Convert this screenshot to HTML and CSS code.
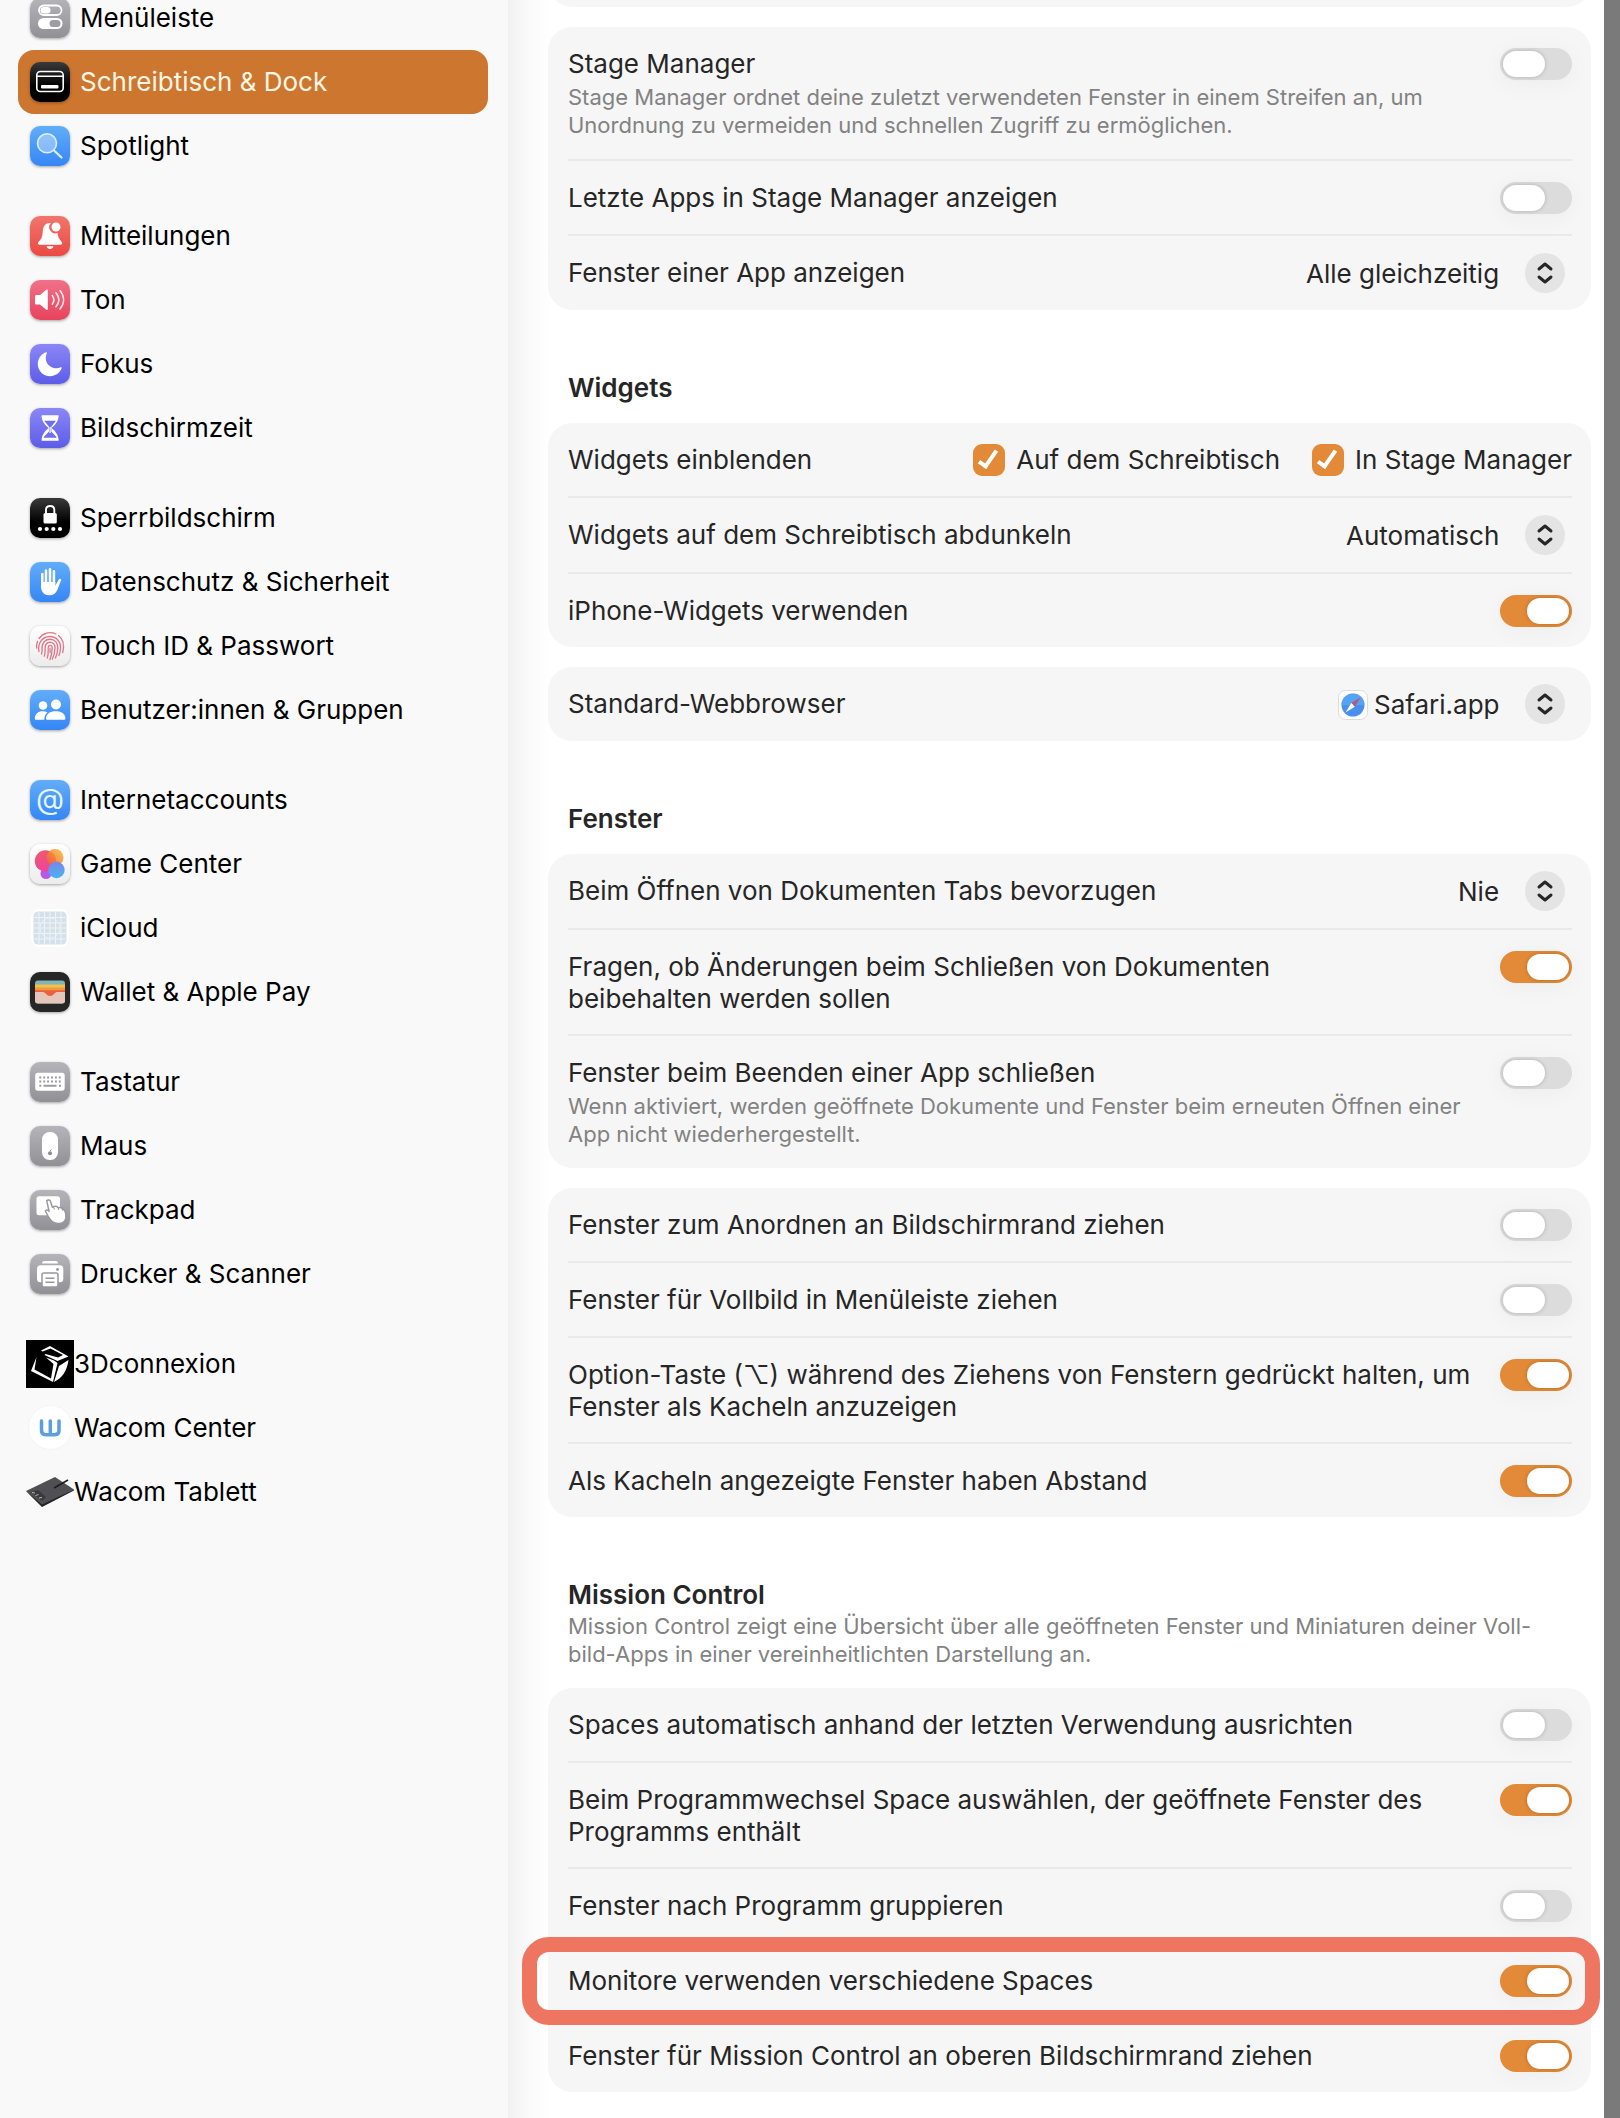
FILE: index.html
```html
<!DOCTYPE html>
<html lang="de">
<head>
    <meta charset="UTF-8">
    <meta name="viewport" content="width=device-width, initial-scale=1.0">
    <title>Schreibtisch &amp; Dock</title>
    <link rel="stylesheet" href="styles.css">
</head>
<body>

<div class="window">

<nav class="sidebar">
    <div class="group">
        <a class="item" href="#">
            <svg class="icon gray" viewBox="0 0 40 40"><rect x="9" y="7.500" width="22.500" height="9.500" rx="4.750" fill="none" stroke="#fff" stroke-width="1.800"/><rect x="10.500" y="9" width="10" height="6.500" rx="3.250" fill="#fff"/><rect x="8" y="20" width="24.500" height="11" rx="5.500" fill="#fff"/><rect x="19.500" y="22" width="11" height="7" rx="3.500" fill="#9d9da3"/></svg>
            Menüleiste
        </a>
        <a class="item active" href="#">
            <svg class="icon black" viewBox="0 0 40 40"><rect x="6.800" y="9.500" width="26.400" height="20" rx="3.500" fill="none" stroke="#fff" stroke-width="1.600"/><path d="M7 14.300h26" stroke="#fff" stroke-width="1.400"/><rect x="11" y="23" width="17.500" height="3.600" rx="1" fill="#fff"/></svg>
            Schreibtisch &amp; Dock
        </a>
        <a class="item" href="#">
            <svg class="icon blue" viewBox="0 0 40 40"><circle cx="17" cy="17.300" r="9.500" fill="#fff" fill-opacity=".35" stroke="#d9f1ff" stroke-width="1.600"/><path d="M24 24.500l7.500 7" stroke="#d9f1ff" stroke-width="2.200" stroke-linecap="round"/></svg>
            Spotlight
        </a>
    </div>

    <div class="group">
        <a class="item" href="#">
            <svg class="icon red" viewBox="0 0 40 40"><path d="M20 7c-4.500 0-7 3.500-7.200 8-.2 5-1 7.500-4 10.500-1.500 1.800-.8 3.200 1 3.200h20.600c1.800 0 2.500-1.400 1-3.200-2.400-2.500-3.600-5-3.900-8.500A6.200 6.200 0 0 1 20.800 7z" fill="#fff"/><circle cx="26" cy="11" r="4.500" fill="#fff"/><path d="M16.500 30.300h7c-.8 3.600-6.200 3.600-7 0z" fill="#fff"/></svg>
            Mitteilungen
        </a>
        <a class="item" href="#">
            <svg class="icon pink" viewBox="0 0 40 40"><path d="M5 16.500c0-1 .6-1.500 1.500-1.500H10l6-5c1-.8 1.800-.4 1.800.8v18c0 1.200-.8 1.600-1.800.8l-6-5H6.500c-.9 0-1.500-.5-1.500-1.500z" fill="#fff"/><path d="M22.300 15.500c2 2.700 2 6 0 8.700M26 12.800c3.500 4.300 3.500 9.700 0 14M30 10.500c4.700 5.800 4.700 12.800 0 18.600" fill="none" stroke="#fff" stroke-opacity=".85" stroke-width="1.600" stroke-linecap="round"/></svg>
            Ton
        </a>
        <a class="item" href="#">
            <svg class="icon indigo" viewBox="0 0 40 40"><path d="M16 8.200C11.200 10 7.800 14.500 7.800 20c0 6.800 5.400 12.200 12.200 12.200 5.500 0 10-3.400 11.700-8.200.2-.7-.3-1-.9-.7C22 27 12.500 19 16.900 9c.2-.6-.2-1-.9-.8z" fill="#fff"/></svg>
            Fokus
        </a>
        <a class="item" href="#">
            <svg class="icon indigo" viewBox="0 0 40 40"><path d="M12.500 7.200h15.200c.8 0 1.100.5.900 1.300-.7 5.500-3.400 8.300-7 11.500 3.600 3.200 6.300 6 7 11.500.2.800-.1 1.300-.9 1.300H12.500c-.8 0-1.100-.5-.9-1.300.7-5.500 3.400-8.300 7-11.500-3.600-3.200-6.300-6-7-11.500-.2-.8.100-1.300.9-1.300z" fill="#fff"/><path d="M14.200 12.800h11.700l-4.600 6v4.700l5 5.300c.4.700.1 1-.5 1H14.500c-.6 0-.9-.3-.5-1l5-5.300v-4.700z" fill="#6f6ff0"/><path d="M20.100 19v6" stroke="#fff" stroke-width="1.300"/></svg>
            Bildschirmzeit
        </a>
    </div>

    <div class="group">
        <a class="item" href="#">
            <svg class="icon black" viewBox="0 0 40 40"><rect x="13.500" y="15" width="13.300" height="10.500" rx="1.600" fill="#fff"/><path d="M16 16v-4.200c0-5 8.300-5 8.300 0V16" fill="none" stroke="#fff" stroke-width="1.900"/><g fill="#fff"><circle cx="10" cy="31" r="2.100"/><circle cx="16.700" cy="31" r="2.100"/><circle cx="23.300" cy="31" r="2.100"/><circle cx="30" cy="31" r="2.100"/></g></svg>
            Sperrbildschirm
        </a>
        <a class="item" href="#">
            <svg class="icon blue" viewBox="0 0 40 40"><path d="M12.300 12v13M16 8.500V22M20 7.200V22M23.900 9.200V22" stroke="#fff" stroke-width="2.600" stroke-linecap="round"/><path d="M11 20h14.300v3.700l3.500-6.200c.9-1.300 2.700-.5 2.200 1l-3.500 9c-1.500 4-4.300 5.800-8 5.800-5.300 0-8.500-3.500-8.500-8.800z" fill="#fff"/></svg>
            Datenschutz &amp; Sicherheit
        </a>
        <a class="item" href="#">
            <svg class="icon white" viewBox="0 0 40 40"><g fill="none" stroke="#e0788a" stroke-width="1.350" stroke-linecap="round"><path d="M9 12.500a13.400 13.400 0 0 1 17-4.500M28.500 9.500c5 4 6 10.500 4.200 17"/><path d="M6.700 22c-.3-2.500 0-4.500.8-6.500M9 25.500c-1.500-8 3-14.700 10.500-15 7-.2 11.500 5.500 11 12-.2 2.500-.6 4.500-1.500 7"/><path d="M11.500 28c1-2.500.5-4 .5-6.500.2-5 3.500-8.300 8-8.300 4.800 0 8 3.600 7.800 8.500-.1 3.500-.9 7-2.300 10.300"/><path d="M14.300 30.200c1.200-3 .8-5.500.8-8.200.2-3.700 2-5.800 4.900-5.800 3.200 0 5.200 2.500 5 6-.2 4-1 7.500-2.700 11"/><path d="M17.300 32c1.200-3.500 1-6.500.9-9.500 0-2.200.6-3.200 1.900-3.200 1.500 0 2.200 1.200 2.100 3.200-.2 4-.8 7.500-2.200 11M20.100 22.500v4"/></g></svg>
            Touch ID &amp; Passwort
        </a>
        <a class="item" href="#">
            <svg class="icon blue" viewBox="0 0 40 40"><g fill="#fff"><circle cx="13" cy="15.500" r="4.300"/><circle cx="26" cy="14.500" r="5"/><path d="M4.800 28.500c0-4.500 3.500-7.200 8-7.200 1.800 0 3.400.4 4.700 1.200-2 1.500-3 3.400-3.200 7.300H6.200c-.9 0-1.400-.4-1.400-1.300z"/><path d="M16 28.500c0-4.800 4.200-7.300 9.700-7.300s9.700 2.500 9.700 7.300c0 .9-.5 1.300-1.400 1.300H17.400c-.9 0-1.400-.4-1.400-1.300z"/></g></svg>
            Benutzer:innen &amp; Gruppen
        </a>
    </div>

    <div class="group">
        <a class="item" href="#">
            <svg class="icon blue" viewBox="0 0 40 40"><text x="20" y="29" text-anchor="middle" font-size="29" fill="#e4f7ff">@</text></svg>
            Internetaccounts
        </a>
        <a class="item" href="#">
            <svg class="icon white" viewBox="0 0 40 40">
                <defs>
                    <linearGradient id="gcRed" x1="0" y1="0" x2=".3" y2="1"><stop offset="0" stop-color="#ee5b6a"/><stop offset="1" stop-color="#f0449c"/></linearGradient>
                    <linearGradient id="gcBlue" x1="0" y1="0" x2="0" y2="1"><stop offset="0" stop-color="#7a86e8"/><stop offset="1" stop-color="#45b4f5"/></linearGradient>
                    <linearGradient id="gcYellow" x1="0" y1="1" x2="1" y2="0"><stop offset="0" stop-color="#f0563c"/><stop offset="1" stop-color="#fbbd2c"/></linearGradient>
                </defs>
                <circle cx="16" cy="29.500" r="5.500" fill="#b35be8"/><circle cx="15.500" cy="17" r="10.700" fill="url(#gcRed)"/><circle cx="25" cy="13.500" r="8.500" fill="url(#gcYellow)" fill-opacity=".85"/><circle cx="26.500" cy="26" r="8.200" fill="url(#gcBlue)"/>
            </svg>
            Game Center
        </a>
        <a class="item" href="#">
            <svg class="icon plain" viewBox="0 0 40 40"><rect x="1" y="1" width="38" height="38" rx="9" fill="#fff"/><rect x="3.500" y="3.500" width="33" height="33" rx="4.500" fill="#d5e1ea"/><path d="M4 9.500h32M4 15h32M4 20h32M4 25.500h32M4 31h32M9 4v32M14.500 4v32M20 4v32M25.500 4v32M31 4v32" stroke="#eef3f6" stroke-width="1"/><circle cx="20" cy="20" r="10" fill="none" stroke="#e8eff4"/></svg>
            iCloud
        </a>
        <a class="item" href="#">
            <svg class="icon dark" viewBox="0 0 40 40"><rect x="5" y="8.500" width="30" height="23" rx="3" fill="#7fb5b8"/><path d="M5 12.500h30V29H5z" fill="#f2c14c"/><path d="M5 15.500h30V29H5z" fill="#f09a3e"/><path d="M5 18.300h30V29H5z" fill="#e8603f"/><path d="M5 20h8c2.500 0 3.500 4 7 4s4.500-4 7-4h8v8.500a3 3 0 0 1-3 3H8a3 3 0 0 1-3-3z" fill="#e6c6ba"/></svg>
            Wallet &amp; Apple Pay
        </a>
    </div>

    <div class="group">
        <a class="item" href="#">
            <svg class="icon gray" viewBox="0 0 40 40"><rect x="5.200" y="10.800" width="29.500" height="18" rx="2.800" fill="#fff"/><path d="M9.300 15.500h22M9.300 19.500h22" stroke="#9a9aa0" stroke-width="2" stroke-dasharray="2 1.900"/><path d="M9.300 23.700h2M29 23.700h2M13.500 23.700h13" stroke="#9a9aa0" stroke-width="2"/></svg>
            Tastatur
        </a>
        <a class="item" href="#">
            <svg class="icon gray" viewBox="0 0 40 40"><rect x="12" y="6" width="16" height="28" rx="7.500" fill="#fff"/><circle cx="20" cy="27.300" r="2" fill="#8d8d93"/><path d="M20 25l1.300-1.500" stroke="#8d8d93" stroke-width="1"/></svg>
            Maus
        </a>
        <a class="item" href="#">
            <svg class="icon gray" viewBox="0 0 40 40"><rect x="6.500" y="6.300" width="23.500" height="19" rx="2.500" fill="#fff"/><path d="M16.700 10.800c1.500-1.600 3.500-.7 3.900.8l1.700 5.600c3-1.500 5-.6 6 .5 2.500-.8 3.700 0 4.500 1.500 2.500 0 3.500 5.300 3 9-.6 3.500-4 5.500-8 5.300-5-.2-7.500-3.300-9.500-7l-3-5.500c.8-1.700 2.500-1.300 3.800.2z" fill="#fff" stroke="#98989e" stroke-width="1.500" stroke-linejoin="round"/><path d="M23.500 16.500l.9 3M28 17l.8 3M32 18.300l.6 2.300" stroke="#98989e" stroke-width="1"/></svg>
            Trackpad
        </a>
        <a class="item" href="#">
            <svg class="icon gray" viewBox="0 0 40 40"><path d="M12 9.500c0-1.700 1-2.500 2.500-2.500h11c1.500 0 2.500.8 2.500 2.500z" fill="#fff"/><rect x="7" y="11.300" width="26.300" height="17" rx="3.500" fill="#fff"/><circle cx="27.500" cy="15.500" r="1.400" fill="#98989e"/><rect x="12" y="19" width="16" height="14" rx="2" fill="#fff" stroke="#98989e" stroke-width="1.500"/><path d="M15.500 24.300h9M15.500 28.300h9" stroke="#98989e" stroke-width="1.500"/></svg>
            Drucker &amp; Scanner
        </a>
    </div>

    <div class="group">
        <a class="item third-party" href="#">
            <svg class="logo" viewBox="0 0 48 48"><rect width="48" height="48" fill="#000"/><path d="M15 10.500L24 6l18.500 10.500-11 4.500-13-6 1-1 12.500 3.500 5-2.500-12.500-6.500-8 3zM10.500 17L8.500 29.500 25 38.500 27.500 24l-7.500-6.500 8 3 3.500 2.500-4.500 19L5 31z" fill="#fff"/><path d="M42.500 20L33 26l-5 16c8-4 13-11 14.500-22z" fill="#fff"/></svg>
            3Dconnexion
        </a>
        <a class="item third-party" href="#">
            <svg class="logo" viewBox="0 0 48 48"><circle cx="24.500" cy="23.500" r="22" fill="#fff" stroke="#f4f4f4"/><path d="M15.500 17v9.500c0 3 1.500 4.200 4.200 4.200h9.100c2.700 0 4.200-1.200 4.200-4.200V17M24.300 17v13" fill="none" stroke="#5b9fdb" stroke-width="3.500" stroke-linecap="round"/></svg>
            Wacom Center
        </a>
        <a class="item third-party" href="#">
            <svg class="logo" viewBox="0 0 48 48"><path d="M0 23L29 9l19 12.500L16 38.500z" fill="#505054"/><path d="M0 23l16 13.500 32-15v1L16 39z" fill="#242427"/><path d="M5 24l7-2 8 7-4 4z" fill="#39393c"/><path d="M28 20l14-8" stroke="#1c1c1e" stroke-width="1.500"/><path d="M6 24.500l3 .5M9.500 27.500l3-1M13 30l3-.5" stroke="#bbb" stroke-width="1"/></svg>
            Wacom Tablett
        </a>
    </div>
</nav>

<main class="content">
    <div class="card previous"></div>

    <div class="card">
        <div class="row">
            <div class="text">
                <label for="stage">Stage Manager</label>
                <p class="hint">Stage Manager ordnet deine zuletzt verwendeten Fenster in einem Streifen an, um<br>Unordnung zu vermeiden und schnellen Zugriff zu ermöglichen.</p>
            </div>
            <input class="switch" type="checkbox" id="stage">
        </div>
        <div class="row">
            <label for="recent">Letzte Apps in Stage Manager anzeigen</label>
            <input class="switch" type="checkbox" id="recent">
        </div>
        <div class="row">
            <label for="appwin">Fenster einer App anzeigen</label>
            <div class="popup">
                <select id="appwin"><option>Alle gleichzeitig</option></select>
                <svg class="arrows" viewBox="0 0 40 40"><path d="M14 16l6-5 6 5M14 24l6 5 6-5"/></svg>
            </div>
        </div>
    </div>

    <h2>Widgets</h2>
    <div class="card">
        <div class="row">
            <span>Widgets einblenden</span>
            <div class="checks">
                <label class="check"><input type="checkbox" checked>Auf dem Schreibtisch</label>
                <label class="check"><input type="checkbox" checked>In Stage Manager</label>
            </div>
        </div>
        <div class="row">
            <label for="dim">Widgets auf dem Schreibtisch abdunkeln</label>
            <div class="popup">
                <select id="dim"><option>Automatisch</option></select>
                <svg class="arrows" viewBox="0 0 40 40"><path d="M14 16l6-5 6 5M14 24l6 5 6-5"/></svg>
            </div>
        </div>
        <div class="row">
            <label for="iphone">iPhone-Widgets verwenden</label>
            <input class="switch" type="checkbox" id="iphone" checked>
        </div>
    </div>
    <div class="card">
        <div class="row">
            <label for="browser">Standard-Webbrowser</label>
            <div class="popup">
                <svg class="safari" viewBox="0 0 30 30"><rect x=".5" y=".5" width="29" height="29" rx="7" fill="#fff" stroke="#ddd"/><circle cx="15" cy="15" r="11.500" fill="#4a8ff0"/><path d="M3.500 15a11.500 11.500 0 0 1 23 0z" fill="#5fb0f5" fill-opacity=".6"/><path d="M22.500 7.500L13.300 13l3.600 3.800z" fill="#b5577a"/><path d="M7.500 22.500l5.800-9.500 3.600 3.800z" fill="#fff"/></svg>
                <select id="browser"><option>Safari.app</option></select>
                <svg class="arrows" viewBox="0 0 40 40"><path d="M14 16l6-5 6 5M14 24l6 5 6-5"/></svg>
            </div>
        </div>
    </div>

    <h2>Fenster</h2>
    <div class="card">
        <div class="row">
            <label for="tabs">Beim Öffnen von Dokumenten Tabs bevorzugen</label>
            <div class="popup">
                <select id="tabs"><option>Nie</option></select>
                <svg class="arrows" viewBox="0 0 40 40"><path d="M14 16l6-5 6 5M14 24l6 5 6-5"/></svg>
            </div>
        </div>
        <div class="row two-lines">
            <label for="ask">Fragen, ob Änderungen beim Schließen von Dokumenten<br>beibehalten werden sollen</label>
            <input class="switch" type="checkbox" id="ask" checked>
        </div>
        <div class="row">
            <div class="text">
                <label for="quit">Fenster beim Beenden einer App schließen</label>
                <p class="hint">Wenn aktiviert, werden geöffnete Dokumente und Fenster beim erneuten Öffnen einer<br>App nicht wiederhergestellt.</p>
            </div>
            <input class="switch" type="checkbox" id="quit">
        </div>
    </div>
    <div class="card">
        <div class="row">
            <label for="edge">Fenster zum Anordnen an Bildschirmrand ziehen</label>
            <input class="switch" type="checkbox" id="edge">
        </div>
        <div class="row">
            <label for="full">Fenster für Vollbild in Menüleiste ziehen</label>
            <input class="switch" type="checkbox" id="full">
        </div>
        <div class="row two-lines">
            <label for="option">Option-Taste (⌥) während des Ziehens von Fenstern gedrückt halten, um<br>Fenster als Kacheln anzuzeigen</label>
            <input class="switch" type="checkbox" id="option" checked>
        </div>
        <div class="row">
            <label for="margins">Als Kacheln angezeigte Fenster haben Abstand</label>
            <input class="switch" type="checkbox" id="margins" checked>
        </div>
    </div>

    <h2>Mission Control</h2>
    <p class="hint intro">Mission Control zeigt eine Übersicht über alle geöffneten Fenster und Miniaturen deiner Voll-<br>bild-Apps in einer vereinheitlichten Darstellung an.</p>
    <div class="card">
        <div class="row">
            <label for="auto">Spaces automatisch anhand der letzten Verwendung ausrichten</label>
            <input class="switch" type="checkbox" id="auto">
        </div>
        <div class="row two-lines">
            <label for="switchapp">Beim Programmwechsel Space auswählen, der geöffnete Fenster des<br>Programms enthält</label>
            <input class="switch" type="checkbox" id="switchapp" checked>
        </div>
        <div class="row">
            <label for="groupapp">Fenster nach Programm gruppieren</label>
            <input class="switch" type="checkbox" id="groupapp">
        </div>
        <div class="row marked">
            <label for="displays">Monitore verwenden verschiedene Spaces</label>
            <input class="switch" type="checkbox" id="displays" checked>
        </div>
        <div class="row">
            <label for="drag">Fenster für Mission Control an oberen Bildschirmrand ziehen</label>
            <input class="switch" type="checkbox" id="drag" checked>
        </div>
    </div>
</main>

</div>

</body>
</html>
```

FILE: styles.css
```css
* {
    box-sizing: border-box;
}

body {
    margin: 0;
    font-family: Inter, "Liberation Sans", sans-serif;
    font-size: 26px;
    line-height: 32px;
    color: #262626;
    background-color: #7a7a7a; /* Desktop behind the window */
}

.window {
    display: flex;
    height: 100vh;
    margin-right: 16px;
    overflow: hidden;
    background-color: #fff;
}

/* Sidebar */
.sidebar {
    flex: 0 0 508px;
    margin-top: -14px; /* List is scrolled a little */
    padding: 0 20px 0 18px;
    background-color: #f9f9f9;
}

.group {
    margin-bottom: 26px;
}

.item {
    display: flex;
    align-items: center;
    gap: 10px;
    height: 64px;
    padding-left: 12px;
    border-radius: 16px;
    color: #000;
    text-decoration: none;
}

.item.active {
    background-color: #cd762f;
    color: #fff6e6;
}

.item.third-party {
    gap: 0;
    padding-left: 8px;
}

.icon {
    width: 40px;
    height: 40px;
    border-radius: 10px;
    box-shadow: 0 1px 3px rgba(0, 0, 0, 0.35);
}

.logo {
    width: 48px;
    height: 48px;
}

.gray {
    background: linear-gradient(#b4b4b9, #909096);
}

.black {
    background: linear-gradient(#3a3a3a, #000 60%);
}

.dark {
    background-color: #262626;
}

.blue {
    background: linear-gradient(#62adf8, #3586f6);
}

.red {
    background: linear-gradient(#f0766d, #ea4a43);
}

.pink {
    background: linear-gradient(#f0718a, #e8435c);
}

.indigo {
    background: linear-gradient(#8b87f6, #5d5ce8);
}

.white {
    background: linear-gradient(#fff, #ececec);
}

.plain {
    box-shadow: none;
}

/* Settings */
.content {
    flex: 1;
    padding: 0 13px 0 40px;
    background: linear-gradient(to right, #f1f1f1, #fafafa 20px, #fff 44px);
}

.card {
    margin-bottom: 20px;
    padding: 0 19px 0 20px;
    border-radius: 24px;
    background-color: rgba(0, 0, 0, 0.035);
}

.card.previous {
    height: 60px;
    margin-top: -53px;
}

.row {
    position: relative;
    display: flex;
    justify-content: space-between;
    align-items: flex-start;
    padding: 21px 0 20px;
    border-bottom: 2px solid #e9e9e9;
}

.row.two-lines {
    padding-bottom: 19px;
}

.row:last-child {
    border-bottom: none;
}

.hint {
    margin: 3px 0 0;
    font-size: 22px;
    line-height: 28px;
    color: #828282;
}

h2 {
    margin: 62px 20px 19px;
    font-size: 26px;
    font-weight: 600;
    line-height: 32px;
}

h2:has(+ .intro) {
    margin-bottom: 1px;
}

.intro {
    margin: 0 20px 20px;
}

.switch {
    appearance: none;
    position: relative;
    flex: none;
    width: 72px;
    height: 32px;
    margin: 0;
    border-radius: 16px;
    background-color: #dcdcdc;
    box-shadow: 0 4px 24px rgba(0, 0, 0, 0.04);
}

.switch::before {
    content: "";
    position: absolute;
    top: 3px;
    left: 3px;
    width: 42px;
    height: 26px;
    border-radius: 13px;
    background-color: #fff;
    box-shadow: 0 0 4px rgba(0, 0, 0, 0.2);
}

.switch:checked {
    background-color: #e28a37;
}

.switch:checked::before {
    left: 27px;
}

.popup {
    position: relative;
    display: flex;
    align-items: center;
    gap: 6px;
    height: 33px;
}

.popup select {
    appearance: none;
    padding: 0 72px 0 0;
    border: none;
    background: none;
    font: inherit;
    color: inherit;
}

.arrows {
    position: absolute;
    top: -4px;
    right: 7px;
    width: 40px;
    height: 40px;
    border-radius: 50%;
    background-color: #e4e4e4;
    fill: none;
    stroke: #262626;
    stroke-width: 3;
    stroke-linecap: round;
    stroke-linejoin: round;
    pointer-events: none;
}

.safari {
    width: 30px;
    height: 30px;
}

.checks {
    display: flex;
    gap: 32px;
}

.check {
    display: flex;
    align-items: center;
    gap: 11px;
}

.check input {
    appearance: none;
    position: relative;
    width: 32px;
    height: 32px;
    margin: 0;
    border-radius: 9px;
    background-color: #e28a37;
}

.check input::before {
    content: "";
    position: absolute;
    top: 3px;
    left: 10px;
    width: 6px;
    height: 17px;
    border: solid #fff;
    border-width: 0 4px 4px 0;
    transform: rotate(35deg);
}

/* Ring around the important setting */
.marked::after {
    content: "";
    position: absolute;
    inset: -7px -28px -8px -46px;
    border: 15px solid #ee7560;
    border-radius: 27px;
    pointer-events: none;
}
```
